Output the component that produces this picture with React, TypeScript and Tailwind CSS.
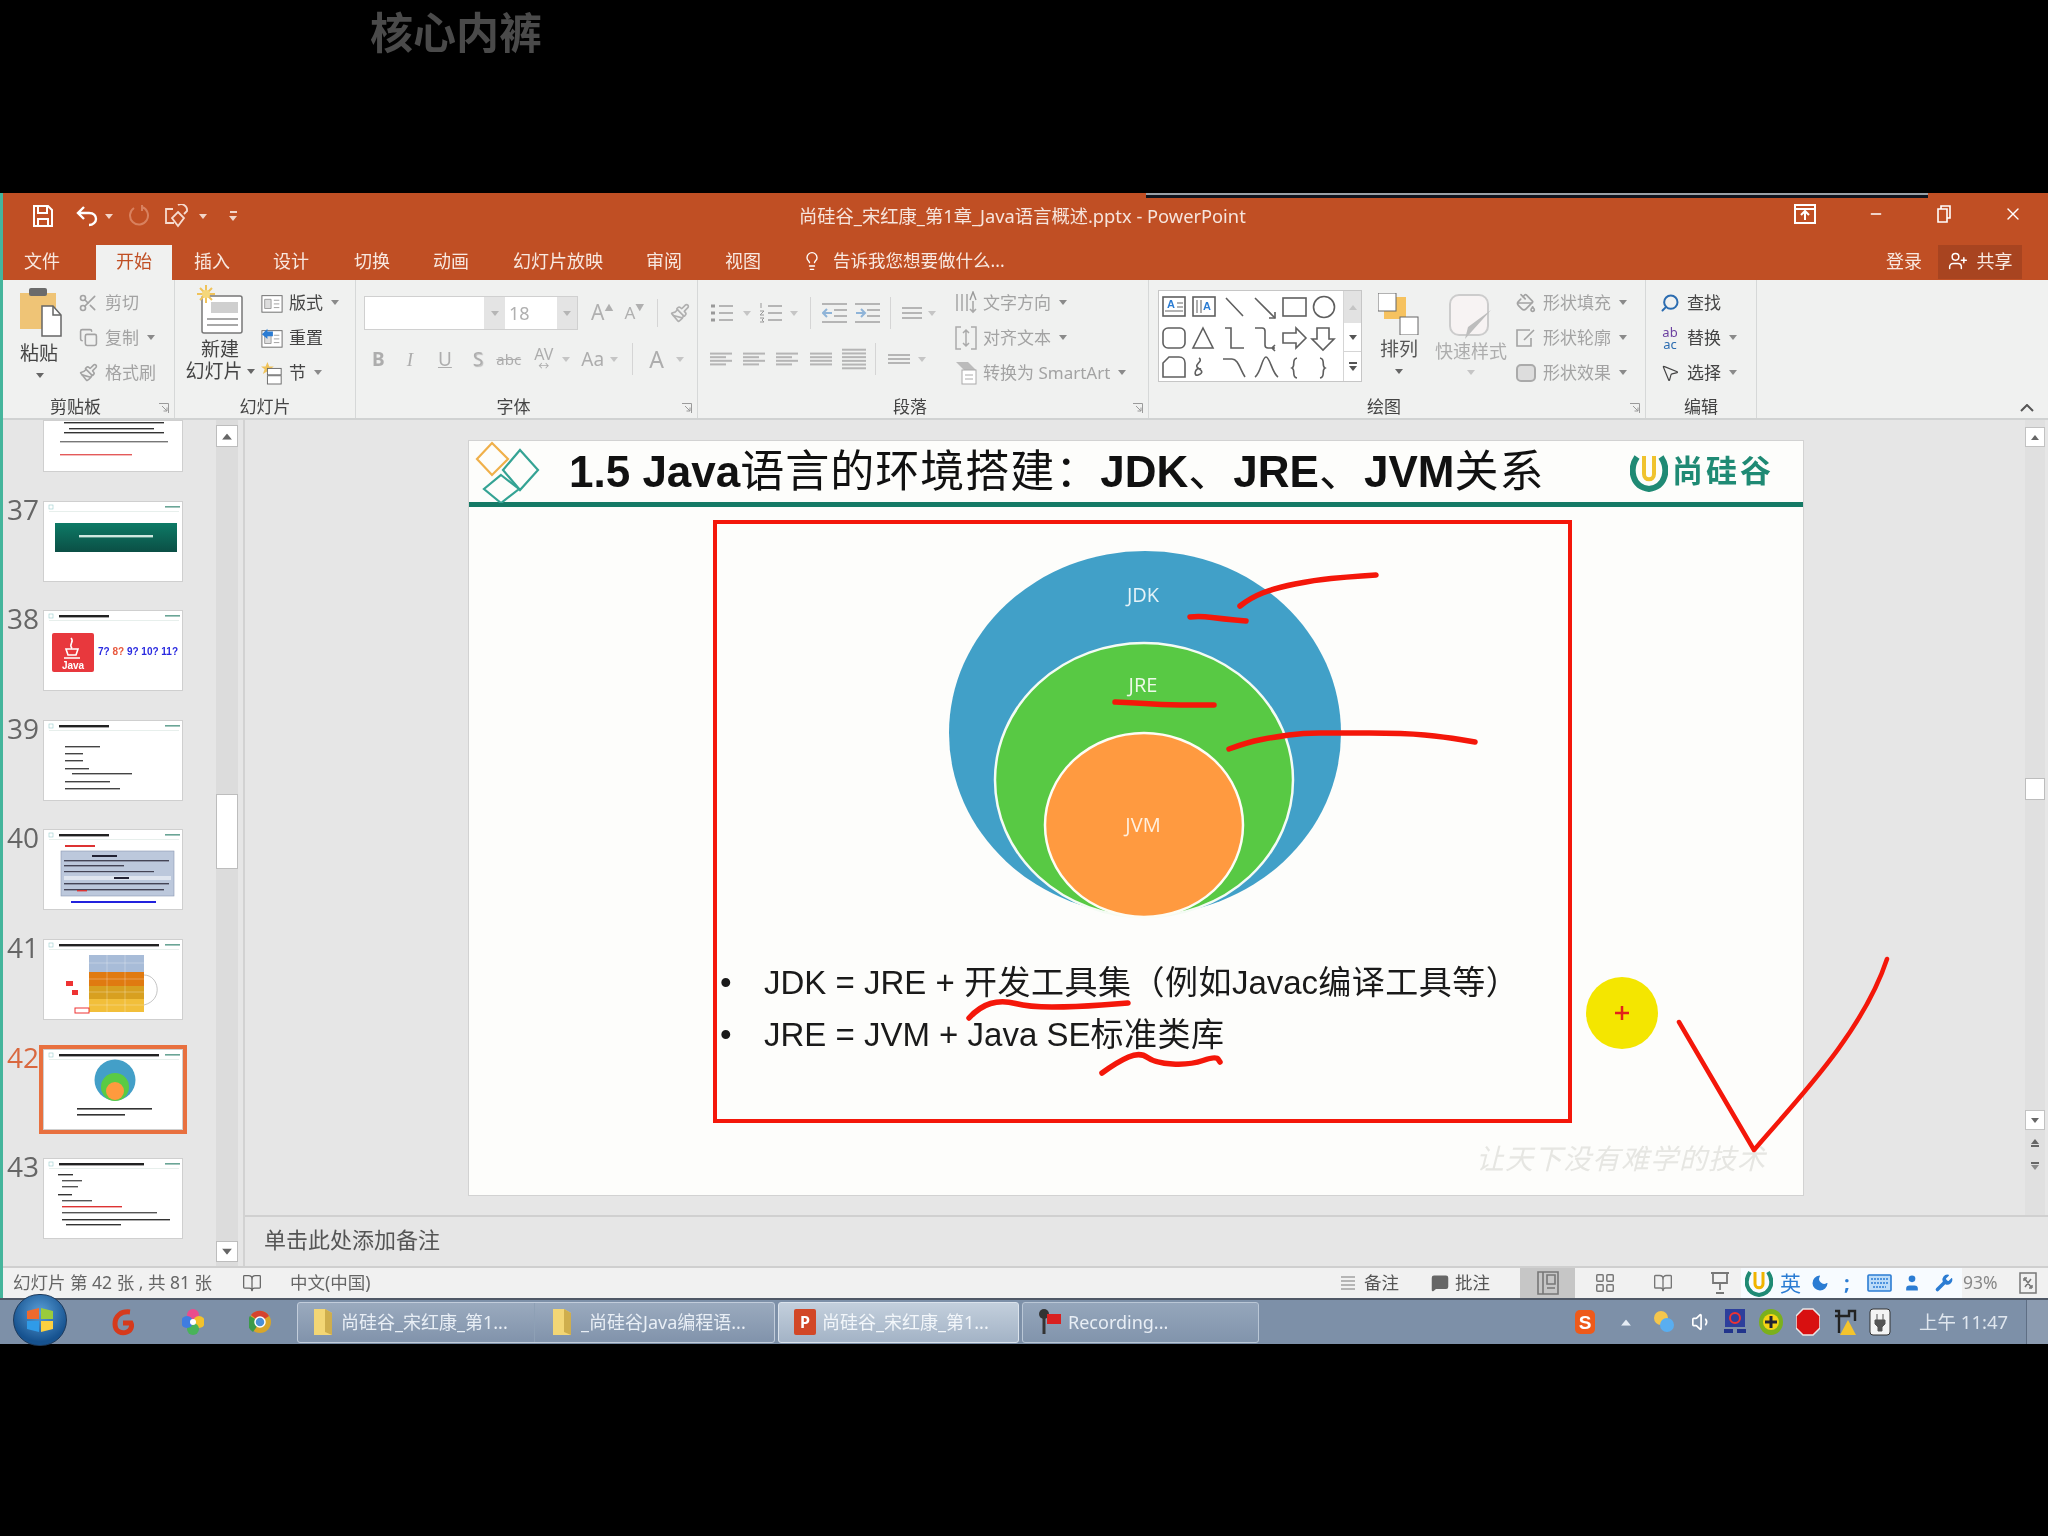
import type { ReactNode } from "react";
import {
  BookOpen,
  Copy,
  LayoutGrid,
  Lightbulb,
  MessageSquare,
  Minus,
  Moon,
  MousePointer2,
  PaintBucket,
  Paintbrush,
  Scissors,
  Search,
  User,
  UserPlus,
  Volume1,
  Wrench,
  X,
} from "lucide-react";

const DIM = "text-[#a3a3a3]";
const ON = "text-[#444]";

function Caret({ className = "text-[#8a8a8a]" }: { className?: string }) {
  return (
    <svg width="8" height="5" viewBox="0 0 8 5" className={`shrink-0 ${className}`}>
      <path d="M0 0h8L4 5z" fill="currentColor" />
    </svg>
  );
}

function Lines({ w = 22, h = 18, n = 3, short = false }: { w?: number; h?: number; n?: number; short?: boolean }) {
  const rows = Array.from({ length: n }, (_, i) => (h / (n + 1)) * (i + 1));
  return (
    <svg width={w} height={h} viewBox={`0 0 ${w} ${h}`} className="shrink-0 text-[#b5b5b5]">
      {rows.map((y, i) => (
        <path key={y} d={`M0 ${y}H${short && i % 2 ? w - 6 : w}`} stroke="currentColor" strokeWidth="2" />
      ))}
    </svg>
  );
}

function BulletList({ numbered = false }: { numbered?: boolean }) {
  return (
    <svg width="23" height="22" viewBox="0 0 23 22" className="shrink-0 text-[#b5b5b5]">
      <path d="M9 4h14M9 11h14M9 18h14" stroke="currentColor" strokeWidth="2" />
      {numbered ? (
        <path d="M2 1v5M1 9h4l-4 4h4M1 16h4l-2 2 2 2H1" fill="none" stroke="#999" strokeWidth="1" />
      ) : (
        <path d="M1 4h4M1 11h4M1 18h4" stroke="#999" strokeWidth="3" />
      )}
    </svg>
  );
}

function IndentIcon({ out = false }: { out?: boolean }) {
  return (
    <svg width="25" height="22" viewBox="0 0 25 22" className="shrink-0 text-[#b5b5b5]">
      <path d="M0 2h25M12 8h13M12 14h13M0 20h25" stroke="currentColor" strokeWidth="2" />
      <path d={out ? "M10 11H2M5 7l-4 4 4 4" : "M1 11h8M6 7l4 4-4 4"} fill="none" stroke="#8fb4d8" strokeWidth="2" />
    </svg>
  );
}

function Group({ className, label, children, launcher = true }: { className: string; label: string; children: ReactNode; launcher?: boolean }) {
  return (
    <div className={`relative flex h-full shrink-0 flex-col border-r border-[#d6d8d8] ${className}`}>
      <div className="h-[116px] overflow-visible">{children}</div>
      <div className={`flex h-[20px] items-center justify-center text-[17px] leading-none ${ON} ${launcher ? "pr-[26px]" : ""}`}>{label}</div>
      {launcher && (
        <svg width="10" height="10" viewBox="0 0 10 10" className="absolute right-[5px] bottom-[5px] text-[#9a9a9a]">
          <path d="M0 .5h9.5V10M3 3l5 5M8 4.5V8H4.5" fill="none" stroke="currentColor" />
        </svg>
      )}
    </div>
  );
}

function Row({ icon, label, caret, tone = DIM }: { icon: ReactNode; label: string; caret?: boolean; tone?: string }) {
  return (
    <div className={`flex h-[35px] items-center text-[17px] leading-none whitespace-nowrap ${tone}`}>
      <span className="flex w-[22px] justify-center">{icon}</span>
      <span className="ml-[6px]">{label}</span>
      {caret && <span className="ml-[8px]"><Caret /></span>}
    </div>
  );
}

function PasteIcon() {
  return (
    <svg width="44" height="52" viewBox="0 0 44 52">
      <rect x="0" y="8" width="36" height="36" fill="#efc476" />
      <rect x="9" y="3" width="18" height="8" rx="2" fill="#6b6b6b" />
      <path d="M22 21h11l8 9v21H22z" fill="#fff" stroke="#666" strokeWidth="1.5" />
      <path d="M33 21v9h8" fill="none" stroke="#666" strokeWidth="1.5" />
    </svg>
  );
}

function NewSlideIcon() {
  return (
    <svg width="46" height="50" viewBox="0 0 46 50">
      <rect x="5" y="11" width="40" height="37" rx="2" fill="#fff" stroke="#777" strokeWidth="1.5" />
      <rect x="14" y="17" width="27" height="11" fill="#cfcfcf" />
      <path d="M10 34h31M10 40h31" stroke="#a8a8a8" strokeWidth="2" />
      <g stroke="#f0c35a" strokeWidth="2">
        <path d="M9 0v18M0 9h18M3 3l12 12M15 3L3 15" />
      </g>
      <circle cx="9" cy="9" r="4" fill="#f5d77b" />
    </svg>
  );
}

function LayoutIcon({ reset = false }: { reset?: boolean }) {
  return (
    <svg width="24" height="24" viewBox="0 0 24 24">
      <rect x="1" y="4" width="22" height="18" fill="#fff" stroke="#666" />
      <path d="M4 8h7v10H4zM14 9h6M14 13h6M14 17h6" fill="#ddd" stroke="#999" />
      {reset && <path d="M1 8l6-6v3h6v5H7v3z" fill="#2b7cd3" />}
    </svg>
  );
}

function SectionIcon() {
  return (
    <svg width="24" height="26" viewBox="0 0 24 26">
      <path d="M5 6l2-5 2 5 5 0-4 3 2 5-5-3-5 3 2-5-4-3z" fill="#f0c35a" />
      <rect x="7" y="8" width="15" height="7" fill="#fff" stroke="#666" />
      <rect x="7" y="16" width="15" height="9" fill="#fff" stroke="#666" />
    </svg>
  );
}

function Shapes() {
  return (
    <svg width="184" height="92" viewBox="0 0 184 92" className="shrink-0 text-[#5f5f5f]">
      <g fill="none" stroke="currentColor" strokeWidth="1.6">
        <rect x="4" y="6" width="22" height="19" />
        <path d="M18 12h6M18 16h6M6 20h18" stroke="#999" />
        <rect x="34" y="6" width="22" height="19" />
        <path d="M38 9v13M42 9v13" stroke="#999" />
        <path d="M67 7l17 18M96 7l20 20" />
        <path d="M116 21v6h-6" />
        <rect x="124" y="7" width="23" height="18" />
        <circle cx="165" cy="16" r="10.5" />
        <rect x="4" y="37" width="22" height="20" rx="5" />
        <path d="M44 37l10 20H34z" />
        <path d="M66 37h6v20h13" />
        <path d="M96 37h7c2 0 3 1 3 3v14c0 2 1 3 3 3h7M116 54l-3 3 3 3" />
        <path d="M124 47l10-10v5h13v10h-13v5z" transform="translate(271 0) scale(-1 1)" />
        <path d="M158 37h12v11h5l-11 11-11-11h5z" />
        <path d="M4 72l6-6h10c4 0 6 3 6 6v14H4z" />
        <path d="M40 67c5 3-6 7-1 10s5 5 0 7-3-9 3-6" />
        <path d="M64 68h9c6 0 8 10 13 18" />
        <path d="M96 86c6-4 7-20 11-20s6 16 12 20" />
        <path d="M138 67c-6 1-1 8-5 10 4 2-1 9 5 10M161 67c6 1 1 8 5 10-4 2 1 9-5 10" />
      </g>
      <text x="8" y="17" fontSize="11" fontWeight="700" fill="#2b7cd3" fontFamily="Liberation Sans, sans-serif">A</text>
      <text x="44" y="19" fontSize="11" fontWeight="700" fill="#2b7cd3" fontFamily="Liberation Sans, sans-serif">A</text>
    </svg>
  );
}

function Ribbon() {
  return (
    <div className="flex h-[140px] shrink-0 border-b-2 border-[#d0d2d2] bg-[#f0f1f0]">
      <Group className="w-[172px]" label="剪贴板">
        <div className="flex pt-[5px]">
          <div className="ml-[17px] flex w-[44px] flex-col items-start text-[19px] leading-none text-[#444]">
            <PasteIcon />
            <span className="mt-[7px]">粘贴</span>
            <span className="ml-[16px] mt-[10px]"><Caret className="text-[#666]" /></span>
          </div>
          <div className="ml-[13px]">
            <Row icon={<Scissors size={20} />} label="剪切" />
            <Row icon={<Copy size={19} />} label="复制" caret />
            <Row icon={<Paintbrush size={19} />} label="格式刷" />
          </div>
        </div>
      </Group>

      <Group className="w-[181px]" label="幻灯片" launcher={false}>
        <div className="flex pt-[5px]">
          <div className="ml-[10px] flex w-[70px] flex-col items-center text-[19px] leading-none text-[#444]">
            <NewSlideIcon />
            <span className="mt-[5px]">新建</span>
            <span className="mt-[3px] flex items-center gap-[4px] whitespace-nowrap">幻灯片<Caret className="text-[#666]" /></span>
          </div>
          <div className="ml-[6px]">
            <Row icon={<LayoutIcon />} label="版式" caret tone={ON} />
            <Row icon={<LayoutIcon reset />} label="重置" tone={ON} />
            <Row icon={<SectionIcon />} label="节" caret tone={ON} />
          </div>
        </div>
      </Group>

      <Group className="w-[342px]" label="字体">
        <div className="ml-[8px] mt-[16px] flex h-[34px] items-center text-[#b0b0b0]">
          <div className="flex h-full w-[214px] border border-[#d0d0d0] bg-white">
            <div className="w-[119px]" />
            <div className="flex w-[21px] items-center justify-center bg-[#e4e4e4]"><Caret className="text-[#b5b5b5]" /></div>
            <div className="flex w-[52px] items-center pl-[4px] text-[18px]">18</div>
            <div className="flex w-[20px] items-center justify-center bg-[#e4e4e4]"><Caret className="text-[#b5b5b5]" /></div>
          </div>
          <span className="ml-[13px] text-[21px]">A</span><span className="mb-[10px] text-[9px]">▲</span>
          <span className="ml-[11px] text-[17px]">A</span><span className="mb-[10px] text-[9px]">▼</span>
          <div className="ml-[13px] h-[28px] w-px bg-[#d5d5d5]" />
          <Paintbrush size={20} className="ml-[12px]" />
        </div>
        <div className="ml-[16px] mt-[12px] flex h-[34px] items-center text-[19px] leading-none text-[#adadad]">
          <span className="font-bold">B</span>
          <span className="ml-[22px] italic font-['Liberation_Serif',serif]">I</span>
          <span className="ml-[25px] underline">U</span>
          <span className="ml-[21px] [text-shadow:1px_1px_1px_#bbb]">S</span>
          <span className="ml-[13px] text-[15px] line-through">abc</span>
          <div className="ml-[13px] flex flex-col items-center">
            <span className="text-[16px] leading-[14px]">AV</span>
            <span className="text-[11px] leading-[10px]">↔</span>
          </div>
          <span className="ml-[9px]"><Caret className="text-[#c5c5c5]" /></span>
          <span className="ml-[11px]">Aa</span>
          <span className="ml-[6px]"><Caret className="text-[#c5c5c5]" /></span>
          <div className="ml-[14px] h-[32px] w-px bg-[#d5d5d5]" />
          <span className="ml-[16px] text-[23px]">A</span>
          <span className="ml-[12px]"><Caret className="text-[#c5c5c5]" /></span>
        </div>
      </Group>

      <Group className="w-[451px]" label="段落">
        <div className="flex">
          <div className="w-[250px]">
            <div className="ml-[12px] mt-[16px] flex h-[34px] items-center">
              <BulletList />
              <span className="ml-[10px]"><Caret className="text-[#c5c5c5]" /></span>
              <span className="ml-[8px]"><BulletList numbered /></span>
              <span className="ml-[8px]"><Caret className="text-[#c5c5c5]" /></span>
              <div className="ml-[12px] h-[32px] w-px bg-[#d5d5d5]" />
              <span className="ml-[11px]"><IndentIcon out /></span>
              <span className="ml-[8px]"><IndentIcon /></span>
              <div className="ml-[10px] h-[32px] w-px bg-[#d5d5d5]" />
              <span className="ml-[11px]"><Lines w={20} h={20} /></span>
              <span className="ml-[6px]"><Caret className="text-[#c5c5c5]" /></span>
            </div>
            <div className="ml-[12px] mt-[12px] flex h-[34px] items-center">
              <Lines w={22} h={18} n={4} short />
              <span className="ml-[11px]"><Lines w={22} h={18} n={4} short /></span>
              <span className="ml-[11px]"><Lines w={22} h={18} n={4} short /></span>
              <span className="ml-[12px]"><Lines w={22} h={18} n={4} /></span>
              <span className="ml-[10px]"><Lines w={24} h={26} n={6} /></span>
              <div className="ml-[9px] h-[32px] w-px bg-[#d5d5d5]" />
              <span className="ml-[12px]"><Lines w={22} h={16} /></span>
              <span className="ml-[8px]"><Caret className="text-[#c5c5c5]" /></span>
            </div>
          </div>
          <div className="ml-[7px] pt-[5px]">
            <Row
              icon={<svg width="22" height="24" viewBox="0 0 22 24"><path d="M2 3v17M7 3v17M12 3v17M18 10v11M15 18l3 3 3-3" fill="none" stroke="#aaa" strokeWidth="1.6" /><path d="M15 9l3-8 3 8" fill="none" stroke="#999" strokeWidth="1.4" /></svg>}
              label="文字方向"
              caret
            />
            <Row
              icon={<svg width="22" height="24" viewBox="0 0 22 24"><path d="M6 1H1v22h5M16 1h5v22h-5M11 4v16M8 7l3-3 3 3M8 17l3 3 3-3" fill="none" stroke="#aaa" strokeWidth="1.5" /></svg>}
              label="对齐文本"
              caret
            />
            <Row
              icon={<svg width="22" height="24" viewBox="0 0 22 24"><path d="M1 1h12l8 8H9z" fill="#bbb" /><rect x="7" y="9" width="14" height="14" fill="#fff" stroke="#aaa" /><path d="M10 14h8M10 18h8" stroke="#aaa" /></svg>}
              label="转换为 SmartArt"
              caret
            />
          </div>
        </div>
      </Group>

      <Group className="w-[497px]" label="绘图">
        <div className="flex pt-[10px]">
          <div className="ml-[9px] flex h-[92px] w-[204px] border border-[#c6c6c6] bg-white">
            <Shapes />
            <div className="flex w-[20px] flex-col border-l border-[#d5d5d5]">
              <div className="flex h-[32px] items-center justify-center bg-[#e2e2e2]"><Caret className="rotate-180 text-[#c4c4c4]" /></div>
              <div className="flex h-[29px] items-center justify-center border-b border-[#d5d5d5]"><Caret className="text-[#555]" /></div>
              <div className="flex flex-1 flex-col items-center justify-center gap-[2px]"><div className="h-[2px] w-[8px] bg-[#555]" /><Caret className="text-[#555]" /></div>
            </div>
          </div>
          <div className="ml-[16px] flex w-[42px] flex-col items-center text-[19px] leading-none text-[#555]">
            <svg width="42" height="42" viewBox="0 0 42 42" className="mt-[3px]">
              <rect x="6" y="4" width="22" height="22" fill="#f6c25f" />
              <rect x="0" y="0" width="18" height="18" fill="#fff" stroke="#666" />
              <rect x="22" y="24" width="18" height="18" fill="#fff" stroke="#666" />
            </svg>
            <span className="mt-[5px] whitespace-nowrap">排列</span>
            <span className="mt-[10px]"><Caret className="text-[#666]" /></span>
          </div>
          <div className="ml-[15px] flex w-[72px] flex-col items-center text-[18px] leading-none text-[#adadad]">
            <svg width="44" height="46" viewBox="0 0 44 46" className="mt-[4px]">
              <rect x="1" y="1" width="38" height="40" rx="9" fill="#f7f3f3" stroke="#ccc" strokeWidth="2" />
              <path d="M42 16L24 36l-8 9 3-12z" fill="#bdbdbd" />
            </svg>
            <span className="mt-[2px] whitespace-nowrap">快速样式</span>
            <span className="mt-[10px]"><Caret className="text-[#c5c5c5]" /></span>
          </div>
          <div className="ml-[8px] -mt-[5px]">
            <Row icon={<PaintBucket size={20} />} label="形状填充" caret />
            <Row icon={<svg width="20" height="20" viewBox="0 0 20 20"><path d="M14 2H1v16h14v-8M8 12L18 2" fill="none" stroke="currentColor" strokeWidth="1.6" /></svg>} label="形状轮廓" caret />
            <Row icon={<span className="h-[18px] w-[20px] rounded-[5px] border-2 border-[#aaa] bg-[#ddd]" />} label="形状效果" caret />
          </div>
        </div>
      </Group>

      <Group className="w-[111px]" label="编辑" launcher={false}>
        <div className="ml-[13px] pt-[5px]">
          <Row icon={<Search size={20} strokeWidth={2.4} className="-scale-x-100 text-[#2b6cb0]" />} label="查找" tone={ON} />
          <Row
            icon={
              <div className="flex flex-col items-center text-[13px] leading-[12px]">
                <span className="text-[#6b3fa0]">ab</span>
                <span className="text-[#2b6cb0]">ac</span>
              </div>
            }
            label="替换"
            caret
            tone={ON}
          />
          <Row icon={<MousePointer2 size={20} strokeWidth={1.4} />} label="选择" caret tone={ON} />
        </div>
      </Group>

      <div className="flex flex-1 items-end justify-end pb-[6px] pr-[14px]">
        <svg width="14" height="8" viewBox="0 0 14 8"><path d="M1 7l6-6 6 6" fill="none" stroke="#555" strokeWidth="2" /></svg>
      </div>
    </div>
  );
}

function TitleBar() {
  return (
    <div className="relative flex h-[52px] shrink-0 items-center bg-[#c04f24] pb-[6px] text-[#f6e4dc]">
      <svg width="20" height="22" viewBox="0 0 20 22" className="ml-[30px]">
        <path d="M1 1h14l4 4v16H1z" fill="none" stroke="#fff" strokeWidth="2" />
        <path d="M5 2v6h9V2M5 21v-7h10v7" fill="none" stroke="#fff" strokeWidth="2" />
      </svg>
      <svg width="22" height="22" viewBox="0 0 22 22" className="ml-[23px]">
        <path d="M8 2L2 8l6 6M2 8h11c5 0 7 3 7 6s-3 6-7 6" fill="none" stroke="#fff" strokeWidth="2.4" />
      </svg>
      <span className="ml-[7px]"><Caret className="text-[#f3d5c8]" /></span>
      <svg width="22" height="24" viewBox="0 0 22 24" className="ml-[15px]">
        <path d="M14 3a9 9 0 1 1-8 1M14 1v6" fill="none" stroke="#d8815f" strokeWidth="2" />
      </svg>
      <svg width="24" height="24" viewBox="0 0 24 24" className="ml-[15px]">
        <path d="M8 5H1v14h8M13 8l6 6-6 8-6-8zM13 1a6 6 0 0 1 9 6l-3 3" fill="none" stroke="#f6dcd0" strokeWidth="1.8" />
      </svg>
      <span className="ml-[10px]"><Caret className="text-[#f3d5c8]" /></span>
      <span className="ml-[22px] flex flex-col items-center gap-[3px]">
        <span className="h-[2px] w-[7px] bg-[#f3d5c8]" />
        <Caret className="text-[#f3d5c8]" />
      </span>
      <div className="ml-[562px] text-[18.3px] leading-none whitespace-nowrap">尚硅谷_宋红康_第1章_Java语言概述.pptx - PowerPoint</div>
      <div className="absolute top-[11px] right-[25px] flex items-center text-white">
        <svg width="22" height="20" viewBox="0 0 22 20" className="mr-[52px]">
          <rect x="1" y="1" width="20" height="18" fill="none" stroke="currentColor" strokeWidth="2" />
          <path d="M1 5h20M11 16V8M7 11l4-4 4 4" fill="none" stroke="currentColor" strokeWidth="2" />
        </svg>
        <Minus size={16} strokeWidth={2} className="mr-[53px]" />
        <svg width="14" height="18" viewBox="0 0 14 18" className="mr-[52px]">
          <path d="M4 4V1h9v12h-3M1 4h9v13H1z" fill="none" stroke="currentColor" strokeWidth="1.6" />
        </svg>
        <X size={20} strokeWidth={1.6} />
      </div>
      <div className="absolute top-0 left-[1143px] h-[5px] w-[782px] border-t-2 border-[#9aa0a6] bg-[#10131c]" />
    </div>
  );
}

function TabBar() {
  const tabs = [
    { name: "插入", cls: "ml-[22px]" },
    { name: "设计", cls: "ml-[43px]" },
    { name: "切换", cls: "ml-[45px]" },
    { name: "动画", cls: "ml-[43px]" },
    { name: "幻灯片放映", cls: "ml-[44px]" },
    { name: "审阅", cls: "ml-[43px]" },
    { name: "视图", cls: "ml-[43px]" },
  ];
  return (
    <div className="relative flex h-[35px] shrink-0 items-center bg-[#c04f24] pb-[4px] text-[18px] leading-none whitespace-nowrap text-[#f8e8e0]">
      <span className="ml-[21px]">文件</span>
      <span className="-mb-[4px] ml-[36px] flex h-[35px] w-[76px] items-center justify-center bg-[#f0f1f0] pb-[4px] text-[#c04f24]">开始</span>
      {tabs.map((t) => (
        <span key={t.name} className={t.cls}>{t.name}</span>
      ))}
      <Lightbulb size={20} strokeWidth={1.6} className="ml-[41px] text-white" />
      <span className="ml-[11px] text-[17.5px]">告诉我您想要做什么...</span>
      <div className="absolute top-0 right-[26px] flex h-[34px] items-center">
        <span className="mr-[16px] pb-[3px]">登录</span>
        <span className="flex h-full w-[84px] items-center justify-center gap-[9px] bg-[#a84420] pb-[3px]">
          <UserPlus size={20} strokeWidth={1.8} className="text-white" />共享
        </span>
      </div>
    </div>
  );
}

const bar = (x: number, y: number, w: number, fill = "#333", h = 1.4) => (
  <rect key={`${x}-${y}-${w}`} x={x} y={y} width={w} height={h} fill={fill} />
);

function ThumbHead({ wide = 50 }: { wide?: number }) {
  return (
    <>
      <rect x="5" y="3" width="4" height="4" fill="none" stroke="#9cc" strokeWidth=".6" />
      {bar(15, 4, wide, "#222", 2.4)}
      {bar(5, 9, 130, "#d8e4e0", 0.6)}
      {bar(121, 4, 15, "#6aa596", 1.6)}
    </>
  );
}

function Thumb({ n, children, selected, clipped }: { n?: number; children: ReactNode; selected?: boolean; clipped?: boolean }) {
  return (
    <div className={`mb-[28.6px] flex shrink-0 ${clipped ? "h-[52px]" : "h-[81px]"}`}>
      <div className={`-mt-[5px] w-[40px] pl-[4px] text-[28px] leading-[26px] font-['Open_Sans',sans-serif] ${selected ? "text-[#d9683f]" : "text-[#666]"}`}>{n}</div>
      <div className={`h-full w-[140px] overflow-hidden border border-[#cfcfcf] bg-white ${selected ? "outline-[4px] outline-[#e8703f]" : ""}`}>
        <svg width="140" height="81" viewBox="0 0 140 81" className={`blur-[0.5px] ${clipped ? "-mt-[29px]" : ""}`}>{children}</svg>
      </div>
    </div>
  );
}

function ThumbPane() {
  return (
    <div className="flex w-[242px] shrink-0 border-r-2 border-[#d2d2d2]">
      <div className="flex h-full w-[213px] flex-col overflow-hidden">
        <Thumb clipped>
          {bar(20, 30, 100)}
          {bar(25, 36, 85)}
          {bar(20, 40, 100)}
          {bar(16, 49, 108, "#777")}
          {bar(16, 62, 72, "#e45a5a")}
        </Thumb>
        <Thumb n={37}>
          <ThumbHead wide={0} />
          <defs>
            <linearGradient id="teal" x1="0" y1="0" x2="0" y2="1">
              <stop offset="0" stopColor="#0d7a66" />
              <stop offset="1" stopColor="#0b4f45" />
            </linearGradient>
          </defs>
          <rect x="11" y="21" width="122" height="29" fill="url(#teal)" />
          {bar(35, 33, 74, "#cfe8e0", 2.4)}
        </Thumb>
        <Thumb n={38}>
          <ThumbHead />
          <rect x="8" y="22" width="42" height="39" rx="2" fill="#e8383d" />
          <path d="M27 27c4 4-3 6 1 10M22 38h12l-2 6h-8zM20 47h16" fill="none" stroke="#fff" strokeWidth="1.6" />
          <text x="29" y="58" textAnchor="middle" fontSize="10" fontWeight="700" fill="#fff" fontFamily="Liberation Sans, sans-serif">Java</text>
          <text x="54" y="44" fontSize="10" fontWeight="700" fill="#2a2ae0" fontFamily="Liberation Sans, sans-serif">
            7? <tspan fill="#e8583d">8?</tspan> 9? 10? 11?
          </text>
        </Thumb>
        <Thumb n={39}>
          <ThumbHead />
          {bar(21, 25, 35, "#444")}
          {bar(21, 32, 18, "#444")}
          {bar(21, 39, 18, "#444")}
          {bar(21, 47, 24, "#444")}
          {bar(28, 52, 60, "#444")}
          {bar(21, 60, 45, "#444")}
          {bar(21, 67, 55, "#444")}
        </Thumb>
        <Thumb n={40}>
          <ThumbHead />
          {bar(21, 15, 30, "#d33", 2)}
          <rect x="17" y="21" width="113" height="45" fill="#bcc8dc" stroke="#8a98b2" strokeWidth=".6" />
          {bar(48, 25, 25, "#223", 2)}
          {bar(20, 30, 105, "#445", 1.4)}
          {bar(20, 35, 60, "#445", 1.4)}
          {bar(20, 41, 90, "#445", 1.2)}
          <rect x="20" y="46" width="107" height="4" fill="#dfe5ef" />
          {bar(70, 47, 15, "#223", 2)}
          {bar(20, 53, 105, "#445", 1.4)}
          {bar(20, 59, 100, "#445", 1.4)}
          {bar(33, 60, 10, "#d33", 1.4)}
          {bar(27, 71, 85, "#2222dd", 2)}
        </Thumb>
        <Thumb n={41}>
          <ThumbHead wide={100} />
          <rect x="45" y="15" width="55" height="17" fill="#a8bcd8" />
          <rect x="45" y="32" width="55" height="14" fill="#e07a10" />
          <rect x="45" y="46" width="55" height="13" fill="#d8a020" />
          <rect x="45" y="59" width="55" height="13" fill="#f2bf3a" />
          <path d="M45 23h55M45 39h55M45 52h55M45 65h55M63 15v57M81 15v57" stroke="#fff" strokeOpacity=".4" strokeWidth=".7" />
          <rect x="22" y="41" width="7" height="5" fill="#e33" />
          <rect x="28" y="50" width="6" height="5" fill="#e33" />
          <rect x="31" y="68" width="14" height="5" fill="none" stroke="#e33" />
          <path d="M100 35c15 0 20 25 0 30" fill="none" stroke="#aaa" strokeWidth=".7" />
        </Thumb>
        <Thumb n={42} selected>
          <ThumbHead wide={100} />
          <circle cx="71" cy="30" r="20.5" fill="#439fc8" />
          <circle cx="71" cy="37" r="14" fill="#5acb44" />
          <circle cx="71" cy="41" r="9" fill="#ff9a3e" />
          {bar(33, 58, 75, "#333", 1.6)}
          {bar(33, 64, 48, "#333", 1.6)}
        </Thumb>
        <Thumb n={43}>
          <ThumbHead wide={85} />
          {bar(14, 15, 15)}
          {bar(18, 21, 20, "#555")}
          {bar(18, 27, 16, "#555")}
          {bar(14, 35, 14)}
          {bar(18, 41, 30, "#555")}
          {bar(18, 47, 60, "#d33")}
          {bar(18, 53, 95, "#555")}
          {bar(18, 60, 108)}
          {bar(22, 65, 55)}
        </Thumb>
      </div>
      <div className="flex w-[22px] flex-col bg-[#dcdcdc] pt-[5px] pb-[4px]">
        <div className="flex h-[22px] items-center justify-center border border-[#bdbdbd] bg-white"><Caret className="rotate-180 scale-125 text-[#666]" /></div>
        <div className="mt-[347px] h-[75px] border border-[#bdbdbd] bg-white" />
        <div className="mt-auto flex h-[21px] items-center justify-center border border-[#bdbdbd] bg-white"><Caret className="scale-125 text-[#666]" /></div>
      </div>
    </div>
  );
}

function Logo() {
  return (
    <svg width="70" height="62" viewBox="0 0 70 62" className="shrink-0">
      <g fill="none" strokeWidth="2.2">
        <path d="M19 2l16 16-16 16L4 18z" stroke="#f0b04a" />
        <path d="M47 9l18 20-18 20-17-20z" stroke="#34a394" />
        <path d="M28 34l18 14-18 14-17-14z" stroke="#34a394" />
      </g>
    </svg>
  );
}

function Brand() {
  return (
    <div className="ml-auto mr-[29px] flex items-center">
      <svg width="38" height="40" viewBox="0 0 38 40">
        <path d="M7 5c-8 12-5 30 12 32 17-2 20-20 12-32" fill="none" stroke="#1f8a74" strokeWidth="6" />
        <path d="M14 4v18c0 7 10 7 10 0V4" fill="none" stroke="#f0c32e" strokeWidth="4" />
      </svg>
      <span className="ml-[4px] text-[31px] leading-none font-bold tracking-[3px] text-[#1f8a74]">尚硅谷</span>
    </div>
  );
}

type Pt = [number, number];

// rounds a pen stroke through the midpoints of its sampled points
function smooth(pts: Pt[]) {
  let d = `M${pts[0][0]} ${pts[0][1]}`;
  for (let i = 1; i < pts.length - 1; i++) {
    const mx = (pts[i][0] + pts[i + 1][0]) / 2;
    const my = (pts[i][1] + pts[i + 1][1]) / 2;
    d += `Q${pts[i][0]} ${pts[i][1]} ${mx} ${my}`;
  }
  const last = pts[pts.length - 1];
  return `${d}L${last[0]} ${last[1]}`;
}

const inkStrokes: Pt[][] = [
  [[1240, 606], [1250, 598], [1275, 588], [1315, 580], [1347, 577], [1376, 575]],
  [[1190, 617], [1200, 616], [1224, 619], [1246, 621]],
  [[1115, 702], [1137, 703], [1169, 705], [1214, 705]],
  [[1229, 749], [1248, 742], [1275, 737], [1303, 733], [1335, 733], [1404, 733], [1445, 737], [1475, 742]],
  [[969, 1018], [979, 1007], [1002, 1000], [1029, 1007], [1075, 1007], [1128, 1003]],
  [[1102, 1073], [1117, 1062], [1140, 1052], [1155, 1063], [1190, 1065], [1216, 1056], [1220, 1062]],
];

function Ink() {
  return (
    <svg width="1500" height="800" viewBox="469 441 1500 800" className="pointer-events-none absolute top-0 left-0 overflow-visible">
      <ellipse cx="1622" cy="1013" rx="36" ry="36" fill="#f4e600" />
      <path d="M1622 1006v14M1615 1013h14" stroke="#e2231a" strokeWidth="2.5" />
      {inkStrokes.map((pts) => (
        <path key={pts[0].join()} d={smooth(pts)} fill="none" stroke="#f4170a" strokeWidth="5.5" strokeLinecap="round" strokeLinejoin="round" />
      ))}
      <path d="M1679 1022L1754 1150C1792 1105 1862 1035 1887 959" fill="none" stroke="#f4170a" strokeWidth="4.5" strokeLinecap="round" strokeLinejoin="round" />
    </svg>
  );
}

function Cjk({ children }: { children: ReactNode }) {
  return <span className="tracking-[1px]">{children}</span>;
}

function Slide() {
  return (
    <div className="relative flex h-[754px] w-[1334px] flex-col bg-[#fdfdfb] font-['Liberation_Sans','Noto_Sans_CJK_SC',sans-serif] shadow-[0_0_0_1px_#d2d2d2]">
      <div className="flex h-[66px] shrink-0 items-center border-b-[5px] border-[#157a66] pl-[4px]">
        <Logo />
        <div className="ml-[26px] text-[44px] leading-none whitespace-nowrap text-[#111]">
          <b>1.5 Java</b><Cjk>语言的环境搭建：</Cjk><b>JDK</b><Cjk>、</Cjk><b>JRE</b><Cjk>、</Cjk><b>JVM</b><Cjk>关系</Cjk>
        </div>
        <Brand />
      </div>
      <div className="ml-[244px] mt-[13px] h-[603px] w-[859px] border-[4px] border-[#f4170a]">
        <svg width="400" height="375" viewBox="945 545 400 375" className="ml-[228px] mt-[21px] font-['Open_Sans',sans-serif]">
          <ellipse cx="1145" cy="733" rx="196" ry="182" fill="#41a0c8" />
          <ellipse cx="1144" cy="780" rx="149" ry="137" fill="#58c944" stroke="#f4fbf4" strokeWidth="2.5" />
          <ellipse cx="1144" cy="825" rx="99" ry="92" fill="#ff9a40" stroke="#fdfdf5" strokeWidth="2.5" />
          <text x="1143" y="602" textAnchor="middle" fontSize="20" fill="#e6f3f8">JDK</text>
          <text x="1143" y="692" textAnchor="middle" fontSize="20" fill="#eef9e8">JRE</text>
          <text x="1143" y="832" textAnchor="middle" fontSize="20" fill="#fff0df">JVM</text>
        </svg>
        <ul className="mt-[37px] pl-[3px] text-[33px] leading-[52px] text-[#1a1a1a]">
          <li className="flex whitespace-nowrap">
            <span className="w-[44px]">•</span>
            <span>JDK = JRE + <span className="tracking-[0.5px]">开发工具集（例如</span>Javac<span className="tracking-[0.5px]">编译工具等）</span></span>
          </li>
          <li className="flex whitespace-nowrap">
            <span className="w-[44px]">•</span>
            <span>JRE = JVM + Java SE<span className="tracking-[0.5px]">标准类库</span></span>
          </li>
        </ul>
      </div>
      <div className="absolute top-[702px] left-[1007px] text-[28px] leading-[34px] tracking-[1px] whitespace-nowrap text-[#e6e6e2] italic">让天下没有难学的技术</div>
      <Ink />
    </div>
  );
}

function MainPane() {
  return (
    <div className="flex min-w-0 flex-1 flex-col">
      <div className="flex h-[795px] shrink-0">
        <div className="min-w-0 flex-1 pl-[224px] pt-[21px]">
          <Slide />
        </div>
        <div className="mr-[3px] flex w-[20px] flex-col items-center bg-[#e0e0e0] pt-[7px]">
          <div className="flex h-[20px] w-full items-center justify-center border border-[#c2c2c2] bg-white"><Caret className="rotate-180 text-[#666]" /></div>
          <div className="mt-[331px] h-[22px] w-full border border-[#bdbdbd] bg-white" />
          <div className="mt-[310px] flex h-[20px] w-full items-center justify-center border border-[#c2c2c2] bg-white"><Caret className="text-[#666]" /></div>
          <div className="mt-[9px] flex flex-col items-center text-[#666]"><Caret className="rotate-180" /><div className="mt-px h-[2px] w-[8px] bg-[#666]" /></div>
          <div className="mt-[15px] flex flex-col items-center text-[#666]"><div className="mb-px h-[2px] w-[8px] bg-[#666]" /><Caret /></div>
        </div>
      </div>
      <div className="flex flex-1 items-center border-t-2 border-[#d0d0d0] pb-[5px] pl-[19px] text-[22px] leading-none text-[#555]">单击此处添加备注</div>
    </div>
  );
}

function ViewIcon({ children }: { children: ReactNode }) {
  return <span className="flex w-[22px] justify-center text-[#777]">{children}</span>;
}

function StatusBar() {
  return (
    <div className="flex h-[32px] shrink-0 items-center border-t-2 border-[#cfcfcf] bg-[#f1f1f1] text-[17.5px] leading-none whitespace-nowrap text-[#666]">
      <div className="flex w-[1338px] shrink-0 items-center">
        <span className="ml-[10px]">幻灯片 第 42 张 , 共 81 张</span>
        <BookOpen size={20} strokeWidth={1.5} className="ml-[30px]" />
        <span className="ml-[28px]">中文(中国)</span>
      </div>
      <Lines w={14} h={20} n={4} />
      <span className="ml-[9px] text-[#555]">备注</span>
      <MessageSquare size={18} fill="#666" className="ml-[32px]" />
      <span className="ml-[6px] text-[#555]">批注</span>
      <div className="ml-[30px] flex h-full w-[55px] items-center justify-center bg-[#c6c6c6]">
        <svg width="22" height="24" viewBox="0 0 22 24"><path d="M1 1h20v22H1zM6 1v22M10 4h8v9h-8zM10 17h8" fill="none" stroke="#777" strokeWidth="1.6" /></svg>
      </div>
      <span className="ml-[19px]"><ViewIcon><LayoutGrid size={22} strokeWidth={1.6} /></ViewIcon></span>
      <span className="ml-[36px]"><ViewIcon><BookOpen size={20} strokeWidth={1.6} /></ViewIcon></span>
      <span className="ml-[35px]">
        <ViewIcon>
          <svg width="20" height="22" viewBox="0 0 20 22"><path d="M1 1h18M3 1v10h14V1M10 11v7M6 21h8" fill="none" stroke="#777" strokeWidth="1.8" /></svg>
        </ViewIcon>
      </span>
      <div className="ml-[10px] flex h-full w-[221px] items-center bg-[#f7fbff]">
        <svg width="28" height="28" viewBox="0 0 28 28" className="ml-[4px]">
          <path d="M5 3c-6 9-4 21 9 23 13-2 15-14 9-23" fill="none" stroke="#1f8a74" strokeWidth="4" />
          <path d="M10 3v12c0 5 8 5 8 0V3" fill="none" stroke="#f0b400" strokeWidth="3" />
        </svg>
        <span className="ml-[7px] text-[21px] text-[#2b7cd3]">英</span>
        <Moon size={20} fill="#2b7cd3" strokeWidth={0} className="ml-[9px]" />
        <span className="ml-[14px] text-[20px] font-bold text-[#2b7cd3]">;</span>
        <svg width="25" height="18" viewBox="0 0 25 18" className="ml-[17px]">
          <rect x="1" y="1" width="23" height="16" rx="1" fill="#bcdcf8" stroke="#2b7cd3" strokeWidth="1.6" />
          <path d="M4 5h17M4 9h17M6 13h13" stroke="#2b7cd3" strokeWidth="1.6" strokeDasharray="2 1" />
        </svg>
        <User size={20} fill="#2b7cd3" strokeWidth={0} className="ml-[10px]" />
        <Wrench size={20} fill="#2b7cd3" strokeWidth={0} className="ml-[12px]" />
      </div>
      <span className="ml-[1px] text-[#888]">93%</span>
      <svg width="18" height="22" viewBox="0 0 18 22" className="ml-[21px]">
        <path d="M1 1h16v20H1zM6 7l6 8M12 7l-6 8M5 6h3M5 6v3M13 16h-3M13 16v-3" fill="none" stroke="#777" strokeWidth="1.5" />
      </svg>
    </div>
  );
}

function FolderIcon() {
  return (
    <svg width="20" height="30" viewBox="0 0 20 30" className="shrink-0">
      <path d="M1 2h11l7 4v22H1z" fill="#f3d675" />
      <path d="M12 2l7 4v22l-7-3z" fill="#cfae4d" />
    </svg>
  );
}

function TaskButton({ className, icon, label }: { className: string; icon: ReactNode; label: string }) {
  return (
    <div className={`flex h-[41px] items-center rounded-[3px] border text-[18px] leading-none whitespace-nowrap ${className}`}>
      {icon}
      <span className="ml-[6px]">{label}</span>
    </div>
  );
}

function Taskbar() {
  return (
    <div className="relative flex h-[46px] shrink-0 items-center border-t-2 border-[#4f5866] bg-[#7d90a8] text-[#e8eef5]">
      <div className="absolute -top-[6px] left-[13px] h-[52px] w-[54px] rounded-full border border-[#1d3a5c] bg-[radial-gradient(circle_at_50%_35%,#5a9fd8,#16528f_70%)]">
        <svg width="30" height="30" viewBox="0 0 30 30" className="mx-auto mt-[10px]">
          <path d="M2 6l12-3v11H2z" fill="#ef6a2e" />
          <path d="M16 3l12 3v8H16z" fill="#9bcb3c" />
          <path d="M2 16h12v11L2 24z" fill="#2f9be8" />
          <path d="M16 16h12v8l-12 3z" fill="#fbd040" />
        </svg>
      </div>
      <svg width="22" height="28" viewBox="0 0 22 28" className="ml-[112px]">
        <path d="M18 4C9 3 3 8 3 16s7 10 12 8 5-7 4-9h-8" fill="none" stroke="#d63a1c" strokeWidth="5" />
      </svg>
      <svg width="22" height="28" viewBox="0 0 22 28" className="ml-[48px]">
        <circle cx="11" cy="7" r="6" fill="#ea4d8c" />
        <circle cx="17" cy="14" r="6" fill="#f3c22c" />
        <circle cx="11" cy="21" r="6" fill="#49b35a" />
        <circle cx="5" cy="14" r="6" fill="#3f7de0" />
        <circle cx="11" cy="14" r="3" fill="#fff" />
      </svg>
      <svg width="22" height="26" viewBox="0 0 22 26" className="ml-[45px]">
        <circle cx="11" cy="13" r="11" fill="#d8a62a" />
        <path d="M11 13L2 6a11 11 0 0 1 18 1z" fill="#d6422f" />
        <path d="M11 13L4 23a11 11 0 0 1-3-16z" fill="#3c9a4a" />
        <circle cx="11" cy="13" r="5" fill="#4a90d9" stroke="#fff" strokeWidth="1.5" />
      </svg>
      <div className="ml-[26px] flex h-[41px] w-[478px] rounded-[3px] border border-[#c2cddb] bg-[linear-gradient(#9aaabe,#8193ab)]">
        <div className="flex w-[238px] items-center border-r border-[#8ea0b5] pl-[15px] text-[18px] leading-none whitespace-nowrap">
          <FolderIcon /><span className="ml-[8px]">尚硅谷_宋红康_第1...</span>
        </div>
        <div className="flex w-[240px] items-center pl-[17px] text-[18px] leading-none whitespace-nowrap">
          <FolderIcon /><span className="ml-[9px]">_尚硅谷Java编程语...</span>
        </div>
      </div>
      <TaskButton
        className="ml-[3px] w-[241px] border-[#dbe3ec] bg-[linear-gradient(#c3cfdc,#a3b3c6)] pl-[15px] text-[#f2f6fa]"
        icon={<span className="flex h-[26px] w-[22px] shrink-0 items-center justify-center rounded-[2px] bg-[#d24726] text-[16px] font-bold text-white">P</span>}
        label="尚硅谷_宋红康_第1..."
      />
      <TaskButton
        className="ml-[3px] w-[237px] border-[#bac7d6] bg-[linear-gradient(#95a6bb,#8194ac)] pl-[15px]"
        icon={
          <svg width="24" height="28" viewBox="0 0 24 28" className="shrink-0">
            <path d="M6 4v22" stroke="#333" strokeWidth="3" />
            <circle cx="6" cy="6" r="5" fill="#333" />
            <path d="M9 6h14v10H9z" fill="#d92020" />
          </svg>
        }
        label="Recording..."
      />
      <svg width="22" height="26" viewBox="0 0 22 26" className="ml-[315px]">
        <rect x="1" y="1" width="20" height="24" rx="5" fill="#ee5a1a" />
        <text x="11" y="20" textAnchor="middle" fontSize="19" fontWeight="700" fill="#fff" fontFamily="Liberation Sans, sans-serif">S</text>
      </svg>
      <span className="ml-[26px]"><Caret className="rotate-180 scale-125 text-[#e6edf5]" /></span>
      <svg width="22" height="26" viewBox="0 0 22 26" className="ml-[23px]">
        <circle cx="8" cy="9" r="7" fill="#f4c64c" />
        <circle cx="14" cy="16" r="7" fill="#59aef0" />
      </svg>
      <Volume1 size={22} strokeWidth={1.8} className="ml-[16px] text-white" />
      <svg width="24" height="28" viewBox="0 0 24 28" className="ml-[10px]">
        <rect x="2" y="1" width="20" height="18" fill="#2d3f9c" />
        <circle cx="12" cy="10" r="5" fill="none" stroke="#e33" strokeWidth="2" />
        <path d="M1 23h9M14 23h9" stroke="#22348c" strokeWidth="4" />
      </svg>
      <svg width="24" height="26" viewBox="0 0 24 26" className="ml-[12px]">
        <ellipse cx="12" cy="13" rx="12" ry="13" fill="#7bb01c" />
        <circle cx="12" cy="13" r="8" fill="#f4d414" />
        <path d="M12 7v12M6 13h12" stroke="#223" strokeWidth="3" />
      </svg>
      <svg width="24" height="28" viewBox="0 0 24 28" className="ml-[13px]">
        <path d="M7 1h10l7 7v12l-7 7H7l-7-7V8z" fill="#d81010" stroke="#e8e8e8" strokeWidth="1.5" />
      </svg>
      <svg width="24" height="28" viewBox="0 0 24 28" className="ml-[13px]">
        <path d="M2 3h4v22M2 8h14V3h6v10" fill="none" stroke="#222" strokeWidth="2.4" />
        <path d="M15 12l8 15H7z" fill="#f4c42c" />
      </svg>
      <svg width="22" height="28" viewBox="0 0 22 28" className="ml-[12px]">
        <path d="M4 1h14a3 3 0 0 1 3 3v20a3 3 0 0 1-3 3H4a3 3 0 0 1-3-3V4a3 3 0 0 1 3-3z" fill="#f4f4f4" stroke="#333" />
        <path d="M8 6v6M14 6v6M6 12h10v4l-3 3v4H9v-4l-3-3z" fill="#555" stroke="#555" />
      </svg>
      <span className="ml-[28px] text-[18.5px] leading-none whitespace-nowrap text-[#dfe6ee]">上午 11:47</span>
      <div className="ml-auto h-full w-[22px] border-l border-[#5e6e84] bg-[#8b9bb0]" />
    </div>
  );
}

export default function App() {
  return (
    <div className="min-h-[1536px] w-[2048px] bg-black font-['Noto_Sans','Noto_Sans_CJK_SC',sans-serif] blur-[0.5px]">
      <div className="h-[193px] pl-[370px] pt-[8px] text-[43px] leading-[50px] font-bold text-[#4a4a4a]">核心内裤</div>
      <div className="flex h-[1105px] flex-col overflow-hidden border-l-[3px] border-[#45b59c] bg-[#e6e6e6]">
        <TitleBar />
        <TabBar />
        <Ribbon />
        <div className="flex h-[846px] shrink-0">
          <ThumbPane />
          <MainPane />
        </div>
        <StatusBar />
      </div>
      <Taskbar />
    </div>
  );
}
